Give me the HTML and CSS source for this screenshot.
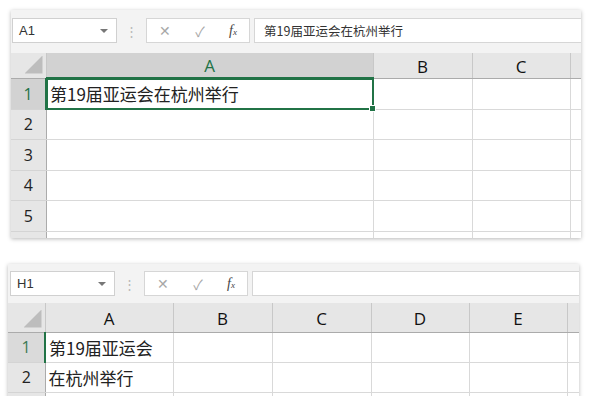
FILE: index.html
```html
<!DOCTYPE html>
<html lang="zh-CN">
<head>
  <meta charset="UTF-8">
  <meta name="viewport" content="width=device-width, initial-scale=1.0">
  <title>第19届亚运会在杭州举行</title>
  <link rel="stylesheet" href="styles.css">
</head>
<body>
  <!-- 合并在一个单元格 -->
  <div class="sheet sheet-one">
    <div class="toolbar">
      <div class="namebox"><span>A1</span><i class="caret"></i></div>
      <div class="grip">⋮</div>
      <div class="fbuttons">
        <span class="fb-x">✕</span>
        <span class="fb-ok">✓</span>
        <span class="fb-fx">f<sub>x</sub></span>
      </div>
      <div class="formula">第19届亚运会在杭州举行</div>
    </div>
    <table class="grid">
      <colgroup>
        <col style="width:35px"><col style="width:327px"><col style="width:99px"><col style="width:98px"><col style="width:11px">
      </colgroup>
      <tr class="head">
        <th class="corner"><i></i></th>
        <th class="on">A</th><th>B</th><th>C</th><th class="tail"></th>
      </tr>
      <tr class="r31">
        <th class="row on">1</th>
        <td class="sel">第19届亚运会在杭州举行<span class="frame"><i class="handle"></i></span></td>
        <td></td><td></td><td></td>
      </tr>
      <tr class="r30"><th class="row">2</th><td></td><td></td><td></td><td></td></tr>
      <tr class="r31"><th class="row">3</th><td></td><td></td><td></td><td></td></tr>
      <tr class="r30"><th class="row">4</th><td></td><td></td><td></td><td></td></tr>
      <tr class="r31"><th class="row">5</th><td></td><td></td><td></td><td></td></tr>
      <tr class="r7"><th class="row"></th><td></td><td></td><td></td><td></td></tr>
    </table>
  </div>

  <!-- 分成两行 -->
  <div class="sheet sheet-two">
    <div class="toolbar">
      <div class="namebox"><span>H1</span><i class="caret"></i></div>
      <div class="grip">⋮</div>
      <div class="fbuttons">
        <span class="fb-x">✕</span>
        <span class="fb-ok">✓</span>
        <span class="fb-fx">f<sub>x</sub></span>
      </div>
      <div class="formula"></div>
    </div>
    <table class="grid">
      <colgroup>
        <col style="width:37px"><col style="width:128px"><col style="width:99px"><col style="width:99px"><col style="width:98px"><col style="width:98px"><col style="width:12px">
      </colgroup>
      <tr class="head tall">
        <th class="corner"><i></i></th>
        <th>A</th><th>B</th><th>C</th><th>D</th><th>E</th><th class="tail"></th>
      </tr>
      <tr class="r30">
        <th class="row active">1</th>
        <td>第19届亚运会</td><td></td><td></td><td></td><td></td><td></td>
      </tr>
      <tr class="r30">
        <th class="row">2</th>
        <td>在杭州举行</td><td></td><td></td><td></td><td></td><td></td>
      </tr>
      <tr class="r30"><th class="row"></th><td></td><td></td><td></td><td></td><td></td><td></td></tr>
    </table>
  </div>
</body>
</html>
```

FILE: styles.css
```css
body {
  margin: 0;
  background: #fff;
  font-family: "Noto Sans", "Noto Sans CJK SC", sans-serif;
  color: #222;
}
.sheet {
  background: #f3f3f3;
  box-shadow: 0 1px 4px rgba(0, 0, 0, 0.28);
  overflow: hidden;
}
.sheet-one {
  margin: 10px 0 0 11px;
  width: 570px;
  height: 228px;
}
.sheet-two {
  margin: 26px 0 0 8px;
  width: 571px;
  height: 140px;
}
.toolbar {
  display: flex;
  align-items: center;
  height: 25px;
  padding: 8px 0 10px 1px;
}
.sheet-two .toolbar {
  padding: 7px 0 7px 2px;
}
.namebox {
  height: 23px;
  background: #fff;
  border: 1px solid #d0d0d0;
  display: flex;
  align-items: center;
  justify-content: space-between;
  padding: 0 8px 0 6px;
  box-sizing: content-box;
  width: 89px;
  font-family: "Liberation Sans", sans-serif;
  font-size: 13px;
  color: #333;
}
.caret {
  width: 0;
  height: 0;
  border-left: 4px solid transparent;
  border-right: 4px solid transparent;
  border-top: 4px solid #777;
}
.grip {
  width: 29px;
  text-align: center;
  color: #b8b8b8;
  font-size: 13px;
}
.fbuttons {
  width: 102px;
  height: 23px;
  background: #fff;
  border: 1px solid #d6d6d6;
  display: flex;
  align-items: center;
  justify-content: space-around;
  color: #a8a8a8;
  font-size: 14px;
}
.fb-fx {
  font-family: "Liberation Serif", serif;
  font-style: italic;
  color: #444;
  font-size: 14px;
}
.fb-fx sub {
  font-size: 9px;
  vertical-align: 0;
}
.formula {
  flex: 1;
  height: 23px;
  margin-left: 4px;
  background: #fff;
  border: 1px solid #d6d6d6;
  border-right: none;
  display: flex;
  align-items: center;
  padding-left: 9px;
  font-family: "Noto Sans CJK SC", sans-serif;
  font-size: 12.5px;
  color: #333;
}
.grid {
  border-collapse: collapse;
  table-layout: fixed;
  width: 100%;
  background: #fff;
}
.grid th {
  background: #e6e6e6;
  font-weight: normal;
  color: #222;
  padding: 0;
  border-right: 1px solid #c8c8c8;
  border-bottom: 1px solid #d4d4d4;
}
.head {
  height: 25px;
}
.head.tall {
  height: 29px;
}
.head th {
  font-family: "Open Sans", sans-serif;
  font-size: 17px;
  color: #111;
  border-bottom: 1px solid #ababab;
  vertical-align: bottom;
  line-height: 23px;
}
.head.tall th {
  line-height: 27px;
}
.head th.on {
  background: #d2d2d2;
  color: #217346;
  border-bottom: 2px solid #217346;
}
.corner {
  position: relative;
}
.corner i {
  position: absolute;
  right: 3px;
  bottom: 4px;
  width: 18px;
  height: 18px;
  background: #bdbdbd;
  clip-path: polygon(100% 0, 100% 100%, 0 100%);
}
.grid th.row {
  font-family: "Open Sans", sans-serif;
  font-size: 16px;
  border-right: 1px solid #ababab;
  text-align: center;
}
.grid th.row.on {
  background: #d2d2d2;
  color: #217346;
  border-right: 2px solid #217346;
}
.grid th.row.active {
  background: #dadada;
  color: #3c7a55;
  border-right: 2px solid #217346;
}
.grid td {
  border-right: 1px solid #d9d9d9;
  border-bottom: 1px solid #d9d9d9;
  padding: 0 0 0 3px;
  font-family: "Noto Sans CJK SC", sans-serif;
  font-size: 17px;
  white-space: nowrap;
  overflow: visible;
}
.r31 { height: 31px; }
.r30 { height: 30px; }
.r7 { height: 7px; }
.sel {
  position: relative;
}
.frame {
  position: absolute;
  left: -1px;
  top: -1px;
  right: -1px;
  bottom: -1px;
  border: 2px solid #217346;
}
.handle {
  position: absolute;
  right: -4px;
  bottom: -4px;
  width: 5px;
  height: 5px;
  background: #217346;
  border: 1px solid #fff;
}
```
